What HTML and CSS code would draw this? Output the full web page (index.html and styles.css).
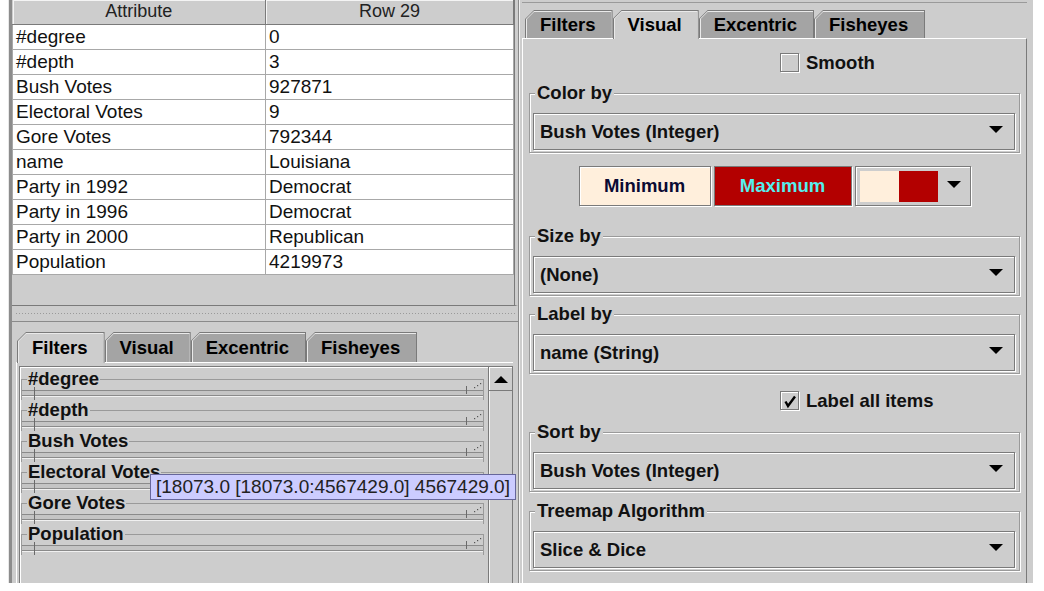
FILE: index.html
```html
<!DOCTYPE html>
<html>
<head>
<meta charset="utf-8">
<link rel="stylesheet" href="styles.css">
</head>
<body>
<div class="app">
  <section class="left">
    <div class="table-pane">
      <table class="attr-table">
        <thead>
          <tr><th class="c1">Attribute</th><th class="c2">Row 29</th></tr>
        </thead>
        <tbody>
          <tr><td>#degree</td><td>0</td></tr>
          <tr><td>#depth</td><td>3</td></tr>
          <tr><td>Bush Votes</td><td>927871</td></tr>
          <tr><td>Electoral Votes</td><td>9</td></tr>
          <tr><td>Gore Votes</td><td>792344</td></tr>
          <tr><td>name</td><td>Louisiana</td></tr>
          <tr><td>Party in 1992</td><td>Democrat</td></tr>
          <tr><td>Party in 1996</td><td>Democrat</td></tr>
          <tr><td>Party in 2000</td><td>Republican</td></tr>
          <tr><td>Population</td><td>4219973</td></tr>
        </tbody>
      </table>
    </div>
    <div class="split-divider"><div class="grip"></div></div>
    <div class="tabbed left-tabbed">
      <div class="tabbar">
        <div class="tab selected"><div class="tab-hl"><div class="tab-fill">Filters</div></div></div>
        <div class="tab"><div class="tab-hl"><div class="tab-fill">Visual</div></div></div>
        <div class="tab"><div class="tab-hl"><div class="tab-fill">Excentric</div></div></div>
        <div class="tab"><div class="tab-hl"><div class="tab-fill">Fisheyes</div></div></div>
      </div>
      <div class="tab-body">
        <div class="scrollpane">
          <div class="filters">
            <fieldset class="filter"><legend>#degree</legend><svg class="fgrip" width="8" height="7" viewBox="0 0 8 7"><rect x="0" y="5" width="1.2" height="1.2" fill="#555"/><rect x="3" y="3" width="1.2" height="1.2" fill="#555"/><rect x="6" y="1" width="1.2" height="1.2" fill="#555"/></svg><div class="track"><span class="thumb-l"></span><span class="thumb-r"></span></div></fieldset>
            <fieldset class="filter"><legend>#depth</legend><svg class="fgrip" width="8" height="7" viewBox="0 0 8 7"><rect x="0" y="5" width="1.2" height="1.2" fill="#555"/><rect x="3" y="3" width="1.2" height="1.2" fill="#555"/><rect x="6" y="1" width="1.2" height="1.2" fill="#555"/></svg><div class="track"><span class="thumb-l"></span><span class="thumb-r"></span></div></fieldset>
            <fieldset class="filter"><legend>Bush Votes</legend><svg class="fgrip" width="8" height="7" viewBox="0 0 8 7"><rect x="0" y="5" width="1.2" height="1.2" fill="#555"/><rect x="3" y="3" width="1.2" height="1.2" fill="#555"/><rect x="6" y="1" width="1.2" height="1.2" fill="#555"/></svg><div class="track"><span class="thumb-l"></span><span class="thumb-r"></span></div></fieldset>
            <fieldset class="filter"><legend>Electoral Votes</legend><svg class="fgrip" width="8" height="7" viewBox="0 0 8 7"><rect x="0" y="5" width="1.2" height="1.2" fill="#555"/><rect x="3" y="3" width="1.2" height="1.2" fill="#555"/><rect x="6" y="1" width="1.2" height="1.2" fill="#555"/></svg><div class="track"><span class="thumb-l"></span><span class="thumb-r"></span></div></fieldset>
            <fieldset class="filter"><legend>Gore Votes</legend><svg class="fgrip" width="8" height="7" viewBox="0 0 8 7"><rect x="0" y="5" width="1.2" height="1.2" fill="#555"/><rect x="3" y="3" width="1.2" height="1.2" fill="#555"/><rect x="6" y="1" width="1.2" height="1.2" fill="#555"/></svg><div class="track"><span class="thumb-l"></span><span class="thumb-r"></span></div></fieldset>
            <fieldset class="filter"><legend>Population</legend><svg class="fgrip" width="8" height="7" viewBox="0 0 8 7"><rect x="0" y="5" width="1.2" height="1.2" fill="#555"/><rect x="3" y="3" width="1.2" height="1.2" fill="#555"/><rect x="6" y="1" width="1.2" height="1.2" fill="#555"/></svg><div class="track"><span class="thumb-l"></span><span class="thumb-r"></span></div></fieldset>
          </div>
          <div class="vscroll">
            <div class="sbtn"><svg width="14" height="8" viewBox="0 0 14 8"><polygon points="0,8 7,1 14,8" fill="#000"/></svg></div>
            <div class="strack"></div>
          </div>
        </div>
      </div>
    </div>
    <div class="tooltip">[18073.0 [18073.0:4567429.0] 4567429.0]</div>
  </section>

  <section class="right">
    <div class="right-top"></div>
    <div class="tabbar right-tabbar">
      <div class="tab"><div class="tab-hl"><div class="tab-fill">Filters</div></div></div>
      <div class="tab selected"><div class="tab-hl"><div class="tab-fill">Visual</div></div></div>
      <div class="tab"><div class="tab-hl"><div class="tab-fill">Excentric</div></div></div>
      <div class="tab"><div class="tab-hl"><div class="tab-fill">Fisheyes</div></div></div>
    </div>
    <div class="panel">
      <div class="check-row smooth-row">
        <span class="checkbox"></span><span class="check-label">Smooth</span>
      </div>

      <fieldset class="group color-group">
        <legend>Color by</legend>
        <div class="combo"><span class="combo-text">Bush Votes (Integer)</span><svg class="arrow" width="14" height="8" viewBox="0 0 14 8"><polygon points="0,0 14,0 7,7" fill="#000"/></svg></div>
      </fieldset>

      <div class="color-row">
        <div class="cbtn min-btn">Minimum</div>
        <div class="cbtn max-btn">Maximum</div>
        <div class="swatch-combo">
          <span class="sw sw-min"></span><span class="sw sw-max"></span>
          <svg class="arrow" width="14" height="8" viewBox="0 0 14 8"><polygon points="0,0 14,0 7,7" fill="#000"/></svg>
        </div>
      </div>

      <fieldset class="group size-group">
        <legend>Size by</legend>
        <div class="combo"><span class="combo-text">(None)</span><svg class="arrow" width="14" height="8" viewBox="0 0 14 8"><polygon points="0,0 14,0 7,7" fill="#000"/></svg></div>
      </fieldset>

      <fieldset class="group label-group">
        <legend>Label by</legend>
        <div class="combo"><span class="combo-text">name (String)</span><svg class="arrow" width="14" height="8" viewBox="0 0 14 8"><polygon points="0,0 14,0 7,7" fill="#000"/></svg></div>
      </fieldset>

      <div class="check-row label-all-row">
        <span class="checkbox checked"><svg width="16" height="16" viewBox="0 0 16 16"><polyline points="3.5,8.5 6,13 13,3.5" fill="none" stroke="#000" stroke-width="2.4"/></svg></span><span class="check-label">Label all items</span>
      </div>

      <fieldset class="group sort-group">
        <legend>Sort by</legend>
        <div class="combo"><span class="combo-text">Bush Votes (Integer)</span><svg class="arrow" width="14" height="8" viewBox="0 0 14 8"><polygon points="0,0 14,0 7,7" fill="#000"/></svg></div>
      </fieldset>

      <fieldset class="group algo-group">
        <legend>Treemap Algorithm</legend>
        <div class="combo"><span class="combo-text">Slice &amp; Dice</span><svg class="arrow" width="14" height="8" viewBox="0 0 14 8"><polygon points="0,0 14,0 7,7" fill="#000"/></svg></div>
      </fieldset>
    </div>
  </section>
</div>
</body>
</html>
```

FILE: styles.css
```css
* { box-sizing: border-box; }

html, body {
  margin: 0;
  padding: 0;
  background: #ffffff;
}

body {
  font-family: "Liberation Sans", Arial, sans-serif;
  color: #000;
}

.app {
  display: flex;
  margin-left: 8px;
  width: 1025px;
  height: 583px;
  background: #cdcdcd;
  overflow: hidden;
}

/* ---------- left side ---------- */
.left {
  position: relative;
  width: 510px;
  display: flex;
  flex-direction: column;
  border-left: 1px solid #e8e8e8;
  box-shadow: inset 3px 0 0 #8c8c8c;
  padding-left: 3px;
}

.table-pane {
  height: 306px;
  border-bottom: 1px solid #7a7a7a;
  border-right: 3px solid #cdcdcd;
  box-shadow: inset -1px 0 0 #7a7a7a;
  background: #cdcdcd;
}

.attr-table {
  border-collapse: collapse;
  width: 501px;
  table-layout: fixed;
  font-size: 19px;
}

.attr-table th {
  height: 24px;
  font-weight: normal;
  font-size: 18px;
  background: #cdcdcd;
  color: #222;
  text-align: center;
  padding: 0;
  border-bottom: 1px solid #7a7a7a;
  border-right: 1px solid #7a7a7a;
  box-shadow: inset 1px 1px 0 #f4f4f4;
}

.attr-table th.c1 { width: 253px; }
.attr-table th.c2 { width: 248px; }

.attr-table td {
  height: 25px;
  background: #fff;
  padding: 0 0 0 3px;
  border-bottom: 1px solid #a8a8a8;
  border-right: 1px solid #a8a8a8;
  border-left: 1px solid #a8a8a8;
  white-space: nowrap;
  line-height: 24px;
  color: #111;
}

.split-divider {
  height: 16px;
  border-bottom: 1px solid #8a8a8a;
  display: flex;
  align-items: center;
  padding: 0 3px;
}

.split-divider .grip {
  height: 3px;
  width: 100%;
  background-image: radial-gradient(circle, #9a9a9a 0.7px, transparent 0.9px);
  background-size: 3px 3px;
}

/* ---------- tabs ---------- */
.tabbar {
  display: flex;
  align-items: flex-end;
}

.tab {
  height: 30px;
  background: #7a7a7a;
  clip-path: polygon(0 100%, 0 9px, 9px 0, 100% 0, 100% 100%);
  padding: 1px 1px 0 1px;
  position: relative;
}

.tab-hl {
  height: 100%;
  background: #eaeaea;
  clip-path: polygon(0 100%, 0 8px, 8px 0, 100% 0, 100% 100%);
  padding: 1px 0 0 1px;
}

.tab-fill {
  height: 100%;
  background: #a4a4a4;
  clip-path: polygon(0 100%, 0 7px, 7px 0, 100% 0, 100% 100%);
  font-weight: bold;
  font-size: 18.5px;
  line-height: 27px;
  padding: 0 16px 0 13px;
  white-space: nowrap;
}

.tab.selected .tab-fill { background: #cdcdcd; }
.tab.selected { z-index: 2; margin-bottom: -1px; height: 31px; }

.left-tabbed {
  flex: 1;
  display: flex;
  flex-direction: column;
  padding: 10px 5px 0 4px;
}

.left-tabbed .tabbar { padding-left: 1px; }

.tab-body {
  flex: 1;
  border-top: 1px solid #fff;
  border-left: 1px solid #fff;
  padding: 3px 0 0 2px;
  display: flex;
  position: relative;
}

.scrollpane {
  flex: 1;
  display: flex;
  border-top: 1px solid #7a7a7a;
  border-left: 1px solid #7a7a7a;
  box-shadow: inset 1px 1px 0 #fff;
}

.filters {
  flex: 1;
  padding: 2px 4px 0 1px;
}

.filter {
  margin: 0;
  padding: 0;
  height: 31px;
  border: 1px solid #9a9a9a;
  border-bottom: none;
  position: relative;
}

.filter legend {
  font-weight: bold;
  font-size: 18.5px;
  line-height: 20px;
  padding: 0 1px;
  margin-left: 5px;
  color: #111;
}

.fgrip {
  position: absolute;
  right: 1px;
  top: -7px;
}

.track {
  height: 6px;
  margin-top: 1px;
  border-top: 1px solid #8a8a8a;
  border-bottom: 1px solid #8a8a8a;
  background: #c4c4c4;
  box-shadow: 0 1px 0 #f0f0f0;
  position: relative;
}

.thumb-l {
  position: absolute;
  left: 12px;
  top: -4px;
  width: 1px;
  height: 13px;
  background: #6a6a6a;
}

.thumb-r {
  position: absolute;
  right: 16px;
  top: -5px;
  width: 1px;
  height: 8px;
  background: #6a6a6a;
}

.vscroll {
  width: 25px;
  display: flex;
  flex-direction: column;
  border-left: 1px solid #7a7a7a;
  border-right: 1px solid #7a7a7a;
}

.sbtn {
  height: 24px;
  border-bottom: 1px solid #7a7a7a;
  box-shadow: inset 1px 1px 0 #fff;
  display: flex;
  align-items: center;
  justify-content: center;
}

.strack {
  flex: 1;
  box-shadow: inset 1px 0 0 #f4f4f4;
}

.tooltip {
  position: absolute;
  left: 141px;
  top: 474px;
  height: 26px;
  padding: 0 5px;
  background: #ccccff;
  border: 1px solid #66669a;
  font-size: 19px;
  line-height: 24px;
  color: #222;
  white-space: nowrap;
  z-index: 5;
}

/* ---------- right side ---------- */
.right {
  flex: 1;
  display: flex;
  flex-direction: column;
  border-left: 1px solid #8a8a8a;
  box-shadow: inset 1px 0 0 #f0f0f0;
  padding-left: 3px;
  padding-right: 6px;
}

.right-top {
  height: 10px;
  border-top: 2px solid #cdcdcd;
  box-shadow: inset 0 1px 0 #9a9a9a;
}

.right-tabbar { padding-left: 3px; height: 28px; }
.right-tabbar .tab { height: 28px; }
.right-tabbar .tab.selected { height: 29px; }
.right-tabbar .tab-fill { line-height: 25px; }

.panel {
  flex: 1;
  border-top: 1px solid #fff;
  border-left: 1px solid #fff;
  border-right: 1px solid #7a7a7a;
  padding: 0 6px;
  display: flex;
  flex-direction: column;
}

.check-row {
  display: flex;
  align-items: center;
  height: 19px;
  padding-left: 251px;
}

.smooth-row { margin-top: 14px; }
.label-all-row { margin-top: 17px; }

.checkbox {
  width: 19px;
  height: 19px;
  border: 1px solid #7a7a7a;
  box-shadow: inset 1px 1px 0 #fff, 1px 1px 0 #fff;
  display: flex;
  align-items: center;
  justify-content: center;
}

.check-label {
  font-weight: bold;
  font-size: 18.5px;
  margin-left: 7px;
  color: #111;
}

.group {
  margin: 0;
  padding: 10px 4px 2px 3px;
  border: 1px solid #9a9a9a;
  box-shadow: inset 1px 1px 0 #fff, 1px 1px 0 #fff;
  min-width: 0;
}

.group legend {
  font-weight: bold;
  font-size: 18.5px;
  line-height: 20px;
  padding: 0 2px;
  margin-left: 2px;
  color: #111;
  background: #cdcdcd;
}

.color-group { margin-top: 11px; }
.size-group { margin-top: 20px; }
.label-group { margin-top: 8px; }
.sort-group { margin-top: 12px; }
.algo-group { margin-top: 9px; }

.combo {
  height: 37px;
  border: 1px solid #7a7a7a;
  box-shadow: inset 1px 1px 0 #fff, 1px 1px 0 #fff;
  display: flex;
  align-items: center;
  padding: 0 11px 0 6px;
}

.combo-text {
  flex: 1;
  font-weight: bold;
  font-size: 18.5px;
  color: #111;
}

.combo .arrow { margin-top: -3px; }

.color-row {
  margin-top: 13px;
  height: 40px;
  display: flex;
  justify-content: center;
  gap: 3px;
}

.cbtn {
  display: flex;
  align-items: center;
  justify-content: center;
  padding: 0 24px;
  font-weight: bold;
  font-size: 18.5px;
  border: 1px solid #7a7a7a;
  box-shadow: inset 1px 1px 0 #fff, 1px 1px 0 #fff;
}

.min-btn { background: #ffefdc; color: #0a0a33; width: 132px; }
.max-btn { background: #b30000; color: #55eeee; width: 138px; box-shadow: 1px 1px 0 #fff; }

.swatch-combo {
  width: 116px;
  display: flex;
  align-items: center;
  padding: 4px 0 4px 4px;
  border: 1px solid #7a7a7a;
  box-shadow: inset 1px 1px 0 #fff, 1px 1px 0 #fff;
}

.sw { height: 31px; width: 39px; }
.sw-min { background: #ffefdc; }
.sw-max { background: #b30000; }
.swatch-combo .arrow { margin-left: 9px; margin-top: -3px; }
```
